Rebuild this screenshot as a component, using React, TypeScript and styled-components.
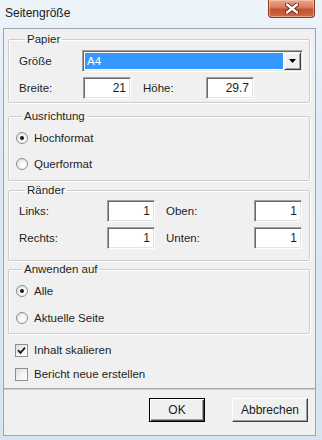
import React from "react";
import styled, { createGlobalStyle, css } from "styled-components";

const Global = createGlobalStyle`
  html, body { margin: 0; padding: 0; background: #ffffff; }
  body { font-family: "Liberation Sans", Arial, sans-serif; }
  * { box-sizing: border-box; }
`;

const Window = styled.div`
  width: 322px;
  height: 440px;
  display: flex;
  flex-direction: column;
  background: linear-gradient(180deg, #eef4fa 0%, #dfe9f5 30%, #d6e4f2 100%);
  overflow: hidden;
`;

const TitleBar = styled.div`
  height: 28px;
  flex: none;
  display: flex;
  align-items: flex-start;
  justify-content: space-between;
  padding-left: 5px;
  padding-right: 7px;
`;

const Title = styled.div`
  font-size: 12px;
  line-height: 14px;
  margin-top: 6px;
  color: #1a1a1a;
`;

const CloseButton = styled.div`
  width: 47px;
  height: 18px;
  display: flex;
  align-items: center;
  justify-content: center;
  border: 1px solid #8a3a22;
  border-top: none;
  border-radius: 0 0 4px 4px;
  background: linear-gradient(180deg, #e9a88f 0%, #d9795a 45%, #c5512c 55%, #cf6a45 100%);
  box-shadow: inset 0 0 0 1px rgba(255, 210, 190, 0.55);
`;

const Client = styled.div`
  flex: 1;
  margin: 0 6px 4px 3px;
  border: 1px solid #9aa6b3;
  background: #f0f0f0;
  display: flex;
  flex-direction: column;
  font-size: 11.5px;
  line-height: 13px;
  color: #1e1e1e;
`;

const Group = styled.fieldset<{ $mt: number; $pt: number; $pb: number; $pl: number; $gap: number }>`
  margin: ${(p) => p.$mt}px 5px 0 4px;
  padding: ${(p) => p.$pt}px 0 ${(p) => p.$pb}px ${(p) => p.$pl}px;
  border: 1px solid #cdcdcd;
  box-shadow: inset 1px 1px 0 #ffffff, 1px 1px 0 #ffffff;
  border-radius: 2px;
  min-inline-size: 0;
  display: flex;
  flex-direction: column;
  gap: ${(p) => p.$gap}px;
`;

const Legend = styled.legend`
  margin-left: 6px;
  padding: 0 2px;
  font-size: 11.5px;
  line-height: 13px;
  color: #1e1e1e;
`;

const Row = styled.div`
  display: flex;
  align-items: center;
  height: 22px;
`;

const Label = styled.span<{ $w: number; $ml?: number }>`
  width: ${(p) => p.$w}px;
  margin-left: ${(p) => p.$ml ?? 0}px;
  flex: none;
  white-space: nowrap;
`;

const sunken = css`
  border-style: solid;
  border-width: 1px;
  border-color: #a0a0a0 #ffffff #ffffff #a0a0a0;
  box-shadow: inset 1px 1px 0 #696969, inset -1px -1px 0 #e3e3e3;
`;

const NumBox = styled.div`
  ${sunken};
  width: 48px;
  height: 22px;
  flex: none;
  background: #ffffff;
  display: flex;
  align-items: center;
  justify-content: flex-end;
  padding-right: 4px;
  font-size: 12px;
`;

const Select = styled.div`
  ${sunken};
  width: 221px;
  height: 22px;
  background: #ffffff;
  display: flex;
  align-items: stretch;
  padding: 2px 1px 2px 2px;
`;

const SelectValue = styled.div`
  flex: 1;
  background: #3399ff;
  color: #ffffff;
  display: flex;
  align-items: center;
  padding-left: 2px;
  font-size: 11.5px;
`;

const DropButton = styled.div`
  width: 17px;
  margin-left: 1px;
  margin-top: -1px;
  margin-bottom: -1px;
  background: #f0f0f0;
  border-style: solid;
  border-width: 1px;
  border-color: #f0f0f0 #404040 #404040 #f0f0f0;
  box-shadow: inset 1px 1px 0 #ffffff, inset -1px -1px 0 #a0a0a0;
  display: flex;
  align-items: center;
  justify-content: center;
`;

const Option = styled.div`
  display: flex;
  align-items: center;
  height: 20px;
  gap: 6px;
`;

const RadioCircle = styled.span<{ $on?: boolean }>`
  width: 12px;
  height: 12px;
  flex: none;
  border-radius: 50%;
  border: 1px solid #8e8f8f;
  background: radial-gradient(circle at 60% 60%, #ffffff 0%, #f4f4f4 45%, #cfcfcf 100%);
  display: flex;
  align-items: center;
  justify-content: center;
  &::after {
    content: "";
    width: 4px;
    height: 4px;
    border-radius: 50%;
    background: #1a1a1a;
    display: ${(p) => (p.$on ? "block" : "none")};
  }
`;

const CheckBox = styled.span`
  width: 13px;
  height: 13px;
  flex: none;
  border: 1px solid #8e8f8f;
  background: linear-gradient(135deg, #dcdcdc 0%, #f6f6f6 60%, #ffffff 100%);
  display: flex;
  align-items: center;
  justify-content: center;
`;

const CheckArea = styled.div`
  display: flex;
  flex-direction: column;
  gap: 4px;
  margin-top: 6px;
  padding-left: 11px;
`;

const CheckRow = styled.div`
  display: flex;
  align-items: center;
  height: 20px;
  gap: 6px;
`;

const Separator = styled.div`
  height: 2px;
  margin-top: 4px;
  border-top: 1px solid #a8a8a8;
  border-bottom: 1px solid #d0d0d0;
`;

const ButtonBar = styled.div`
  display: flex;
  justify-content: flex-end;
  gap: 27px;
  padding: 8px 7px 0 0;
`;

const Button = styled.div<{ $w: number; $default?: boolean }>`
  width: ${(p) => p.$w}px;
  height: 24px;
  display: flex;
  align-items: center;
  justify-content: center;
  font-size: 12px;
  color: #1a1a1a;
  background: #f0f0f0;
  border-style: solid;
  border-width: 1px;
  border-color: ${(p) => (p.$default ? "#000000" : "#ffffff #404040 #404040 #ffffff")};
  box-shadow: ${(p) =>
    p.$default
      ? "inset 1px 1px 0 #ffffff, inset -1px -1px 0 #404040, inset -2px -2px 0 #a0a0a0"
      : "inset -1px -1px 0 #a0a0a0, inset 1px 1px 0 #f0f0f0"};
`;

const CloseX = () => (
  <svg width="14" height="11" viewBox="0 0 14 11">
    <path d="M2 1.5 L12 9.5 M12 1.5 L2 9.5" stroke="#5a2414" strokeWidth="4.2" strokeLinecap="round" />
    <path d="M2 1.5 L12 9.5 M12 1.5 L2 9.5" stroke="#ffffff" strokeWidth="2.4" strokeLinecap="round" />
  </svg>
);

const Arrow = () => (
  <svg width="7" height="4" viewBox="0 0 7 4">
    <path d="M0 0 H7 L3.5 4 Z" fill="#000000" />
  </svg>
);

const Tick = () => (
  <svg width="9" height="9" viewBox="0 0 9 9">
    <path d="M1 4.2 L3.5 6.8 L8 1.6" stroke="#1a1a1a" strokeWidth="1.8" fill="none" />
  </svg>
);

export default function App() {
  return (
    <>
      <Global />
      <Window>
        <TitleBar>
          <Title>Seitengröße</Title>
          <CloseButton>
            <CloseX />
          </CloseButton>
        </TitleBar>
        <Client>
          <Group $mt={4} $pt={4} $pb={3} $pl={10} $gap={5}>
            <Legend>Papier</Legend>
            <Row>
              <Label $w={63}>Größe</Label>
              <Select>
                <SelectValue>A4</SelectValue>
                <DropButton>
                  <Arrow />
                </DropButton>
              </Select>
            </Row>
            <Row>
              <Label $w={64}>Breite:</Label>
              <NumBox>21</NumBox>
              <Label $w={63} $ml={12}>Höhe:</Label>
              <NumBox>29.7</NumBox>
            </Row>
          </Group>

          <Group $mt={7} $pt={5} $pb={6} $pl={7} $gap={6}>
            <Legend>Ausrichtung</Legend>
            <Option>
              <RadioCircle $on />
              <span>Hochformat</span>
            </Option>
            <Option>
              <RadioCircle />
              <span>Querformat</span>
            </Option>
          </Group>

          <Group $mt={3} $pt={3} $pb={11} $pl={10} $gap={5}>
            <Legend>Ränder</Legend>
            <Row>
              <Label $w={88}>Links:</Label>
              <NumBox>1</NumBox>
              <Label $w={88} $ml={11}>Oben:</Label>
              <NumBox>1</NumBox>
            </Row>
            <Row>
              <Label $w={88}>Rechts:</Label>
              <NumBox>1</NumBox>
              <Label $w={88} $ml={11}>Unten:</Label>
              <NumBox>1</NumBox>
            </Row>
          </Group>

          <Group $mt={2} $pt={5} $pb={5} $pl={7} $gap={7}>
            <Legend>Anwenden auf</Legend>
            <Option>
              <RadioCircle $on />
              <span>Alle</span>
            </Option>
            <Option>
              <RadioCircle />
              <span>Aktuelle Seite</span>
            </Option>
          </Group>

          <CheckArea>
            <CheckRow>
              <CheckBox>
                <Tick />
              </CheckBox>
              <span>Inhalt skalieren</span>
            </CheckRow>
            <CheckRow>
              <CheckBox />
              <span>Bericht neue erstellen</span>
            </CheckRow>
          </CheckArea>

          <Separator />

          <ButtonBar>
            <Button $w={56} $default>OK</Button>
            <Button $w={76}>Abbrechen</Button>
          </ButtonBar>
        </Client>
      </Window>
    </>
  );
}
